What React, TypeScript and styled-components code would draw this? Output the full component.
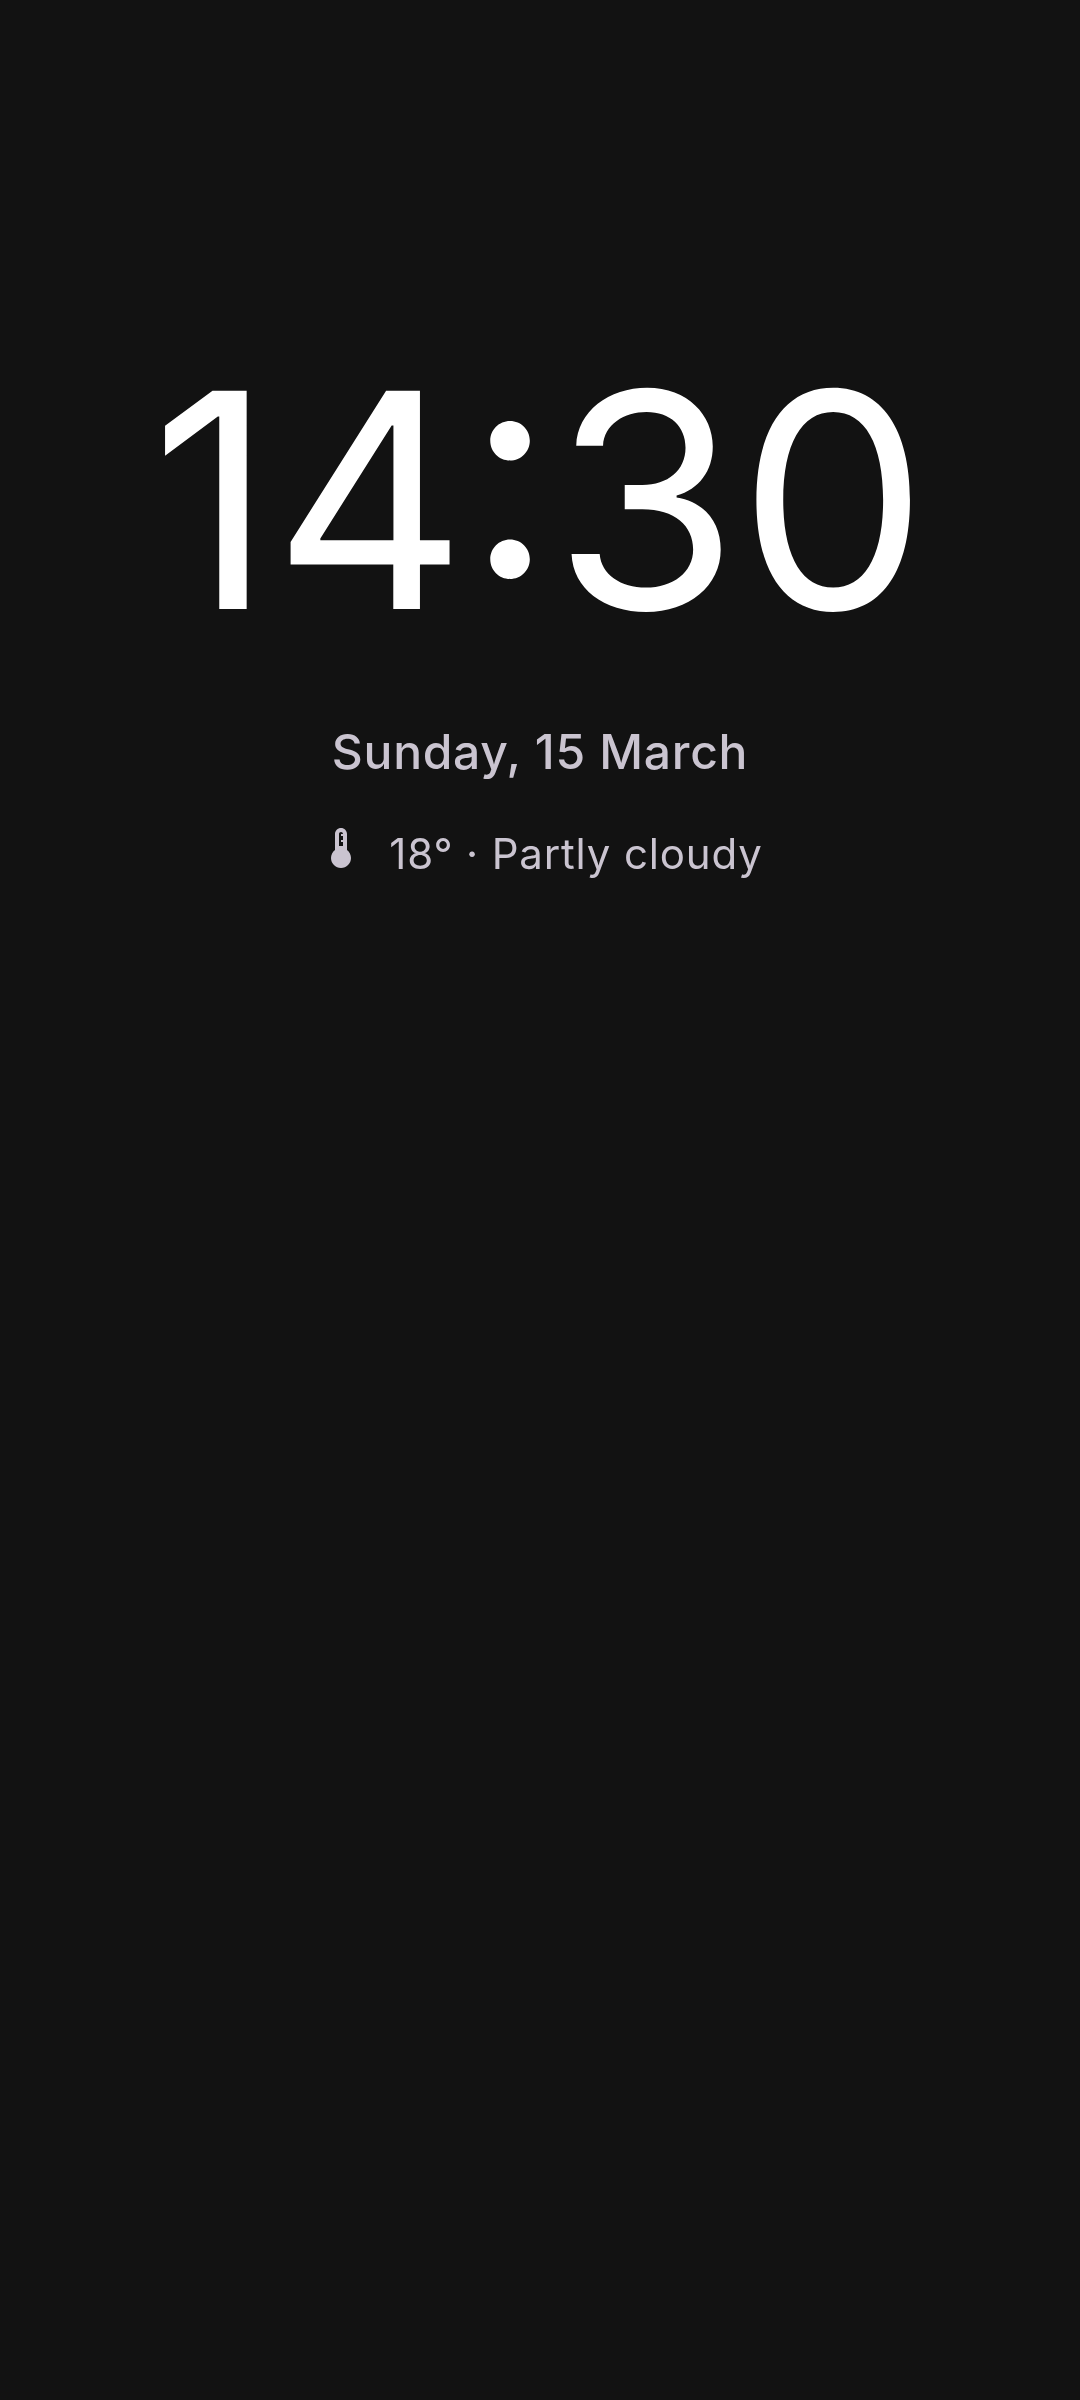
import React from "react";
import styled, { createGlobalStyle } from "styled-components";

const Global = createGlobalStyle`
  html, body { margin: 0; padding: 0; background: #121212; }
`;

const Screen = styled.div`
  width: 1080px;
  height: 2400px;
  background: #121212;
  font-family: Inter;
  padding-top: 320px;
  box-sizing: border-box;
  text-align: center;
  will-change: transform;
`;

const Clock = styled.div`
  padding-left: 151px;
  font-size: 300px;
  line-height: 360px;
  white-space: nowrap;
  text-align: left;
  color: #ffffff;
`;

const DateLine = styled.div`
  margin-top: 44px;
  font-size: 48px;
  line-height: 56px;
  font-weight: 500;
  letter-spacing: 0.7px;
  color: #cac4d0;
`;

const Weather = styled.div`
  margin-top: 44px;
  display: flex;
  justify-content: center;
  align-items: flex-start;
  gap: 24px;
  font-size: 42px;
  line-height: 60px;
  letter-spacing: 0.84px;
  color: #cac4d0;
`;

const Icon = () => (
  <svg width="48" height="48" viewBox="0 0 24 24" fill="#cac4d0">
    <path d="M15 13V5c0-1.66-1.34-3-3-3S9 3.34 9 5v8c-1.21.91-2 2.37-2 4 0 2.76 2.24 5 5 5s5-2.24 5-5c0-1.63-.79-3.09-2-4zm-4-8c0-.55.45-1 1-1s1 .45 1 1h-1v1h1v2h-1v1h1v2h-2V5z" />
  </svg>
);

export default function App() {
  return (
    <Screen>
      <Global />
      <Clock>14:30</Clock>
      <DateLine>Sunday, 15 March</DateLine>
      <Weather>
        <Icon />
        <span>18° · Partly cloudy</span>
      </Weather>
    </Screen>
  );
}
